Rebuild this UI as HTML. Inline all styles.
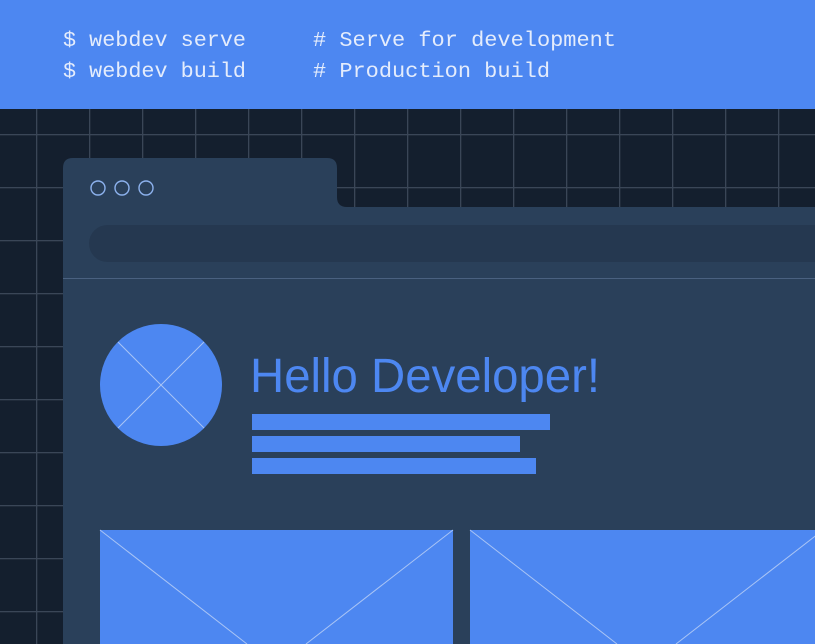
<!DOCTYPE html>
<html><head><meta charset="utf-8"><style>
html,body{margin:0;padding:0;width:815px;height:644px;overflow:hidden;background:#141f2e}
svg{display:block}
</style></head><body>
<svg width="815" height="644" viewBox="0 0 815 644" xmlns="http://www.w3.org/2000/svg">
<defs>
<pattern id="g" x="36" y="28" width="53" height="53" patternUnits="userSpaceOnUse">
<rect x="0" y="0" width="1.3" height="53" fill="#3a4657"/>
<rect x="0" y="0" width="53" height="1.3" fill="#3a4657"/>
</pattern>
</defs>
<rect width="815" height="644" fill="#141f2e"/>
<rect y="108" width="815" height="536" fill="url(#g)"/>
<rect width="815" height="109" fill="#4d87f1"/>
<g font-family="Liberation Mono, monospace" font-size="21" fill="#e4ecfc">
<text x="63" y="46" textLength="183" lengthAdjust="spacingAndGlyphs">$ webdev serve</text>
<text x="313" y="46" textLength="303" lengthAdjust="spacingAndGlyphs"># Serve for development</text>
<text x="63" y="77" textLength="183" lengthAdjust="spacingAndGlyphs">$ webdev build</text>
<text x="313" y="77" textLength="237" lengthAdjust="spacingAndGlyphs"># Production build</text>
</g>
<path d="M63 168 Q63 158 73 158 L327 158 Q337 158 337 168 L337 197 Q337 207 347 207 L815 207 L815 644 L63 644 Z" fill="#2a405a"/>
<g fill="none" stroke="#8db2ee" stroke-width="1.4">
<circle cx="98" cy="188" r="7"/><circle cx="122" cy="188" r="7"/><circle cx="146" cy="188" r="7"/>
</g>
<rect x="89" y="225" width="760" height="37" rx="18.5" fill="#253850"/>
<rect x="63" y="278" width="752" height="1" fill="#4a6180"/>
<circle cx="161" cy="385" r="61" fill="#4d87f1"/>
<g stroke="#a9c4f5" stroke-width="1">
<line x1="118" y1="342" x2="204" y2="428"/><line x1="204" y1="342" x2="118" y2="428"/>
</g>
<text x="250" y="392" font-family="Liberation Sans, sans-serif" font-size="48" fill="#4d87f1" textLength="350" lengthAdjust="spacingAndGlyphs">Hello Developer!</text>
<rect x="252" y="414" width="298" height="16" fill="#4d87f1"/>
<rect x="252" y="436" width="268" height="16" fill="#4d87f1"/>
<rect x="252" y="458" width="284" height="16" fill="#4d87f1"/>
<rect x="100" y="530" width="353" height="120" fill="#4d87f1"/>
<rect x="470" y="530" width="360" height="120" fill="#4d87f1"/>
<g stroke="#a9c4f5" stroke-width="1" fill="none">
<path d="M100 530 L247 644 M453 530 L306 644"/>
<path d="M470 530 L617 644 M823 530 L676 644"/>
</g>
</svg>
</body></html>
